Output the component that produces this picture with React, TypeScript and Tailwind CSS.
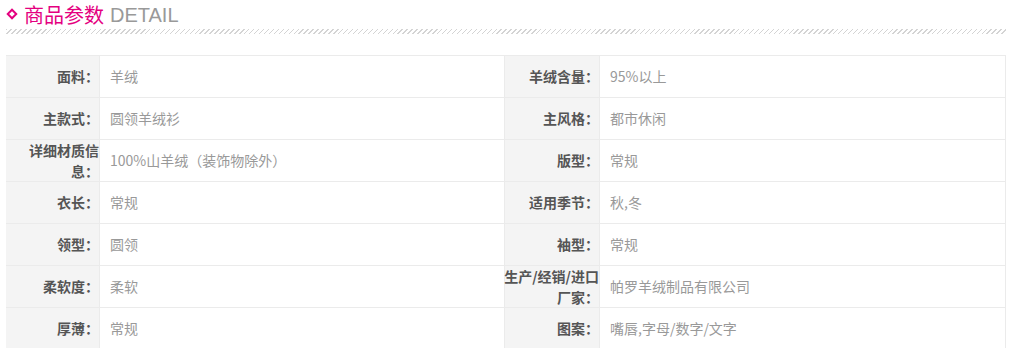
import React from "react";

const rows: [React.ReactNode, string, React.ReactNode, string][] = [
  ["面料：", "羊绒", "羊绒含量：", "95%以上"],
  ["主款式：", "圆领羊绒衫", "主风格：", "都市休闲"],
  ["详细材质信息：", "100%山羊绒（装饰物除外）", "版型：", "常规"],
  ["衣长：", "常规", "适用季节：", "秋,冬"],
  ["领型：", "圆领", "袖型：", "常规"],
  [
    "柔软度：",
    "柔软",
    <>
      生产/经销/进口
      <br />
      厂家：
    </>,
    "帕罗羊绒制品有限公司",
  ],
  ["厚薄：", "常规", "图案：", "嘴唇,字母/数字/文字"],
];

export default function App() {
  return (
    <div
      className="w-[1009px] h-[348px] bg-white overflow-hidden"
      style={{ fontFamily: '"Noto Sans CJK SC", "Liberation Sans", sans-serif' }}
    >
      <div className="ml-[6px] w-[1000px]">
        <div className="flex items-center h-[29px] pt-[1px]">
          <div className="w-[12px] h-[12px] flex items-center justify-center mr-[6px] mt-[-2px]">
            <div className="w-[8px] h-[8px] border-[2px] border-[#e4007f] rotate-45" />
          </div>
          <span className="text-[20px] leading-[28px] text-[#e4007f]">商品参数</span>
          <span
            className="text-[20px] leading-[28px] text-[#999] ml-[6px]"
            style={{ fontFamily: '"Liberation Sans", sans-serif' }}
          >
            DETAIL
          </span>
        </div>
        <div className="h-[5px] w-full bg-[repeating-linear-gradient(135deg,#d4d4d4_0px,#d4d4d4_1px,transparent_1px,transparent_3.5px)]" />
        <div className="mt-[21px] border-t border-r border-[#ebebeb] text-[14px]">
          {rows.map((r, i) => (
            <div key={i} className="flex h-[42px] border-b border-[#ebebeb]">
              <div className="w-[93px] bg-[#f4f4f4] flex items-center justify-end text-right pl-3 font-bold text-[#555] leading-[21px]">
                <span>{r[0]}</span>
              </div>
              <div className="w-[405px] border-l border-[#ebebeb] flex items-center pl-[10px] text-[#999]">
                {r[1]}
              </div>
              <div className="w-[95px] border-l border-[#ebebeb] bg-[#f4f4f4] flex items-center justify-end text-right pl-0 font-bold text-[#555] leading-[21px] whitespace-nowrap">
                <span>{r[2]}</span>
              </div>
              <div className="w-[406px] border-l border-[#ebebeb] flex items-center pl-[10px] text-[#999]">
                {r[3]}
              </div>
            </div>
          ))}
        </div>
      </div>
    </div>
  );
}
